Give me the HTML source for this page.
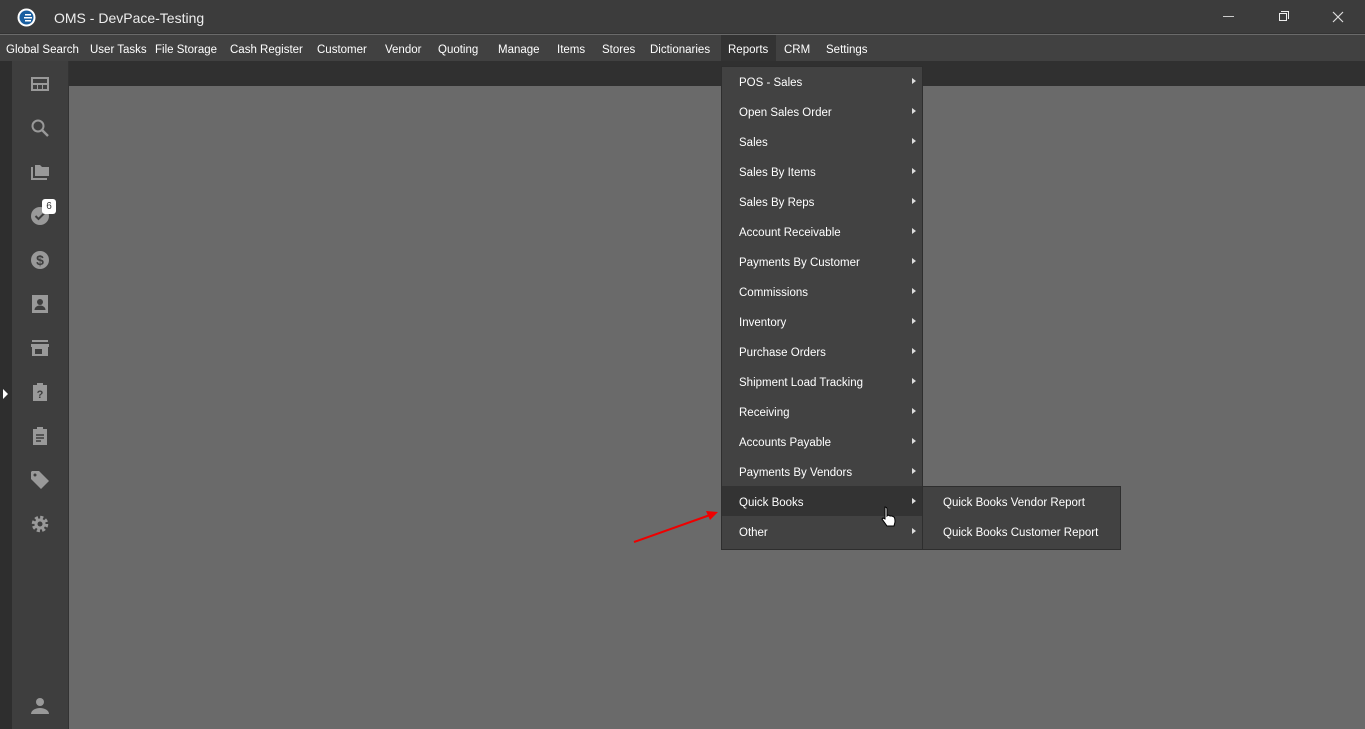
<!DOCTYPE html>
<html><head><meta charset="utf-8"><style>
*{margin:0;padding:0;box-sizing:border-box}
body{width:1365px;height:729px;overflow:hidden;background:#6a6a6a;font-family:"Liberation Sans",sans-serif;font-size:11.5px;color:#fff;position:relative}
.abs{position:absolute}
#title{left:0;top:0;width:1365px;height:34px;background:#3c3c3c;border-bottom:1px solid #333}
#mb{left:0;top:35px;width:1365px;height:26px;background:#414141}
#mb span{position:absolute;top:9px;white-space:nowrap}
#band{left:69px;top:61px;width:1296px;height:25px;background:#303030}
#strip{left:0;top:61px;width:12px;height:668px;background:#2e2e2e}
#side{left:12px;top:61px;width:57px;height:668px;background:#3e3e3e;border-right:1px solid #333}
.ic{position:absolute;left:18px;width:20px;height:20px}
#menu{left:721px;top:66px;width:202px;height:484px;background:#424242;border:1px solid #2e2e2e}
.it{position:absolute;left:0;width:200px;height:30px;line-height:32px;padding-left:17px}
.it:after{content:"";position:absolute;left:190px;top:11px;border-left:4px solid #ddd;border-top:3.5px solid transparent;border-bottom:3.5px solid transparent}
#sub{left:922px;top:486px;width:199px;height:64px;background:#424242;border:1px solid #2e2e2e}
#sub div{position:absolute;left:20px}
</style></head><body>
<div id="title" class="abs">
<svg class="abs" style="left:17px;top:8px" width="19" height="19" viewBox="0 0 19 19"><circle cx="9.5" cy="9.5" r="9" fill="#fff"/><circle cx="9.5" cy="9.5" r="7" fill="#1a5fa0"/><rect x="8" y="6" width="6" height="1.5" fill="#fff"/><rect x="7" y="9" width="8" height="1.5" fill="#fff"/><rect x="8" y="12" width="6" height="1.5" fill="#fff"/></svg>
<div class="abs" style="left:54px;top:10px;font-size:14px;color:#eee">OMS - DevPace-Testing</div>
<div class="abs" style="left:1223px;top:16px;width:11px;height:1px;background:#ccc"></div>
<div class="abs" style="left:1279px;top:13px;width:8px;height:8px;border:1px solid #eee"></div>
<div class="abs" style="left:1281px;top:11px;width:8px;height:8px;border-top:1px solid #eee;border-right:1px solid #eee"></div>
<svg class="abs" style="left:1332px;top:11px" width="12" height="12"><path d="M1 1L11 11M11 1L1 11" stroke="#ddd" stroke-width="1.2"/></svg>
</div>
<div id="mb" class="abs">
<div class="abs" style="left:721px;top:0;width:55px;height:26px;background:#333"></div>
<span style="left:6px">Global Search</span><span style="left:90px">User Tasks</span><span style="left:155px">File Storage</span><span style="left:230px">Cash Register</span><span style="left:317px">Customer</span><span style="left:385px">Vendor</span><span style="left:438px">Quoting</span><span style="left:498px">Manage</span><span style="left:557px">Items</span><span style="left:602px">Stores</span><span style="left:650px">Dictionaries</span><span style="left:728px">Reports</span><span style="left:784px">CRM</span><span style="left:826px">Settings</span>
</div>
<div id="band" class="abs"></div>
<div id="strip" class="abs"></div>
<div class="abs" style="left:3px;top:389px;border-left:5px solid #fff;border-top:5px solid transparent;border-bottom:5px solid transparent"></div>
<div id="side" class="abs">
<svg class="ic" style="top:13px" viewBox="0 0 20 20" fill="#999"><path d="M1 3h18v14H1zM3 5v4h14V5zM3 11v4h4v-4zm5 0v4h4v-4zm5 0v4h4v-4z" fill-rule="evenodd"/></svg>
<svg class="ic" style="top:57px" viewBox="0 0 20 20"><circle cx="8" cy="8" r="5.5" stroke="#999" stroke-width="2" fill="none"/><path d="M12 12l6 6" stroke="#999" stroke-width="2.4"/></svg>
<svg class="ic" style="top:101px" viewBox="0 0 20 20" fill="#999"><path d="M1 5h2v11h14v2H1zM5 3h5l2 2h7v9H5z"/></svg>
<svg class="ic" style="top:145px" viewBox="0 0 20 20"><circle cx="10" cy="10" r="9" fill="#999"/><path d="M5.5 10l3 3 6-6" stroke="#3e3e3e" stroke-width="2" fill="none"/></svg>
<div class="abs" style="left:30px;top:138px;width:14px;height:15px;background:#fff;border-radius:3px;color:#333;font-size:10px;text-align:center;line-height:15px">6</div>
<svg class="ic" style="top:189px" viewBox="0 0 20 20"><circle cx="10" cy="10" r="9" fill="#999"/><text x="10" y="15" font-size="14" font-weight="bold" text-anchor="middle" fill="#3e3e3e" font-family="Liberation Sans">$</text></svg>
<svg class="ic" style="top:233px" viewBox="0 0 20 20" fill="#999"><path d="M2 1h16v18H2z"/><circle cx="10" cy="8" r="3" fill="#3e3e3e"/><path d="M4.5 16c0-3 3-4.5 5.5-4.5s5.5 1.5 5.5 4.5z" fill="#3e3e3e"/></svg>
<svg class="ic" style="top:277px" viewBox="0 0 20 20" fill="#999"><path d="M2 2h16v2H2zM1 6h18v3H1zM2 9h16v9H2z"/><rect x="5" y="11" width="7" height="5" fill="#3e3e3e"/></svg>
<svg class="ic" style="top:321px" viewBox="0 0 20 20"><path d="M3 3h14v16H3z" fill="#999"/><rect x="7" y="1" width="6" height="4" fill="#999"/><text x="10" y="16" font-size="11" font-weight="bold" text-anchor="middle" fill="#3e3e3e" font-family="Liberation Sans">?</text></svg>
<svg class="ic" style="top:365px" viewBox="0 0 20 20"><path d="M3 3h14v16H3z" fill="#999"/><rect x="7" y="1" width="6" height="4" fill="#999"/><path d="M6 9h8M6 12h8M6 15h5" stroke="#3e3e3e" stroke-width="1.5"/></svg>
<svg class="ic" style="top:409px" viewBox="0 0 20 20" fill="#999"><path d="M1 2v7l10 10 8-8L9 1H2z"/><circle cx="5" cy="5" r="1.5" fill="#3e3e3e"/></svg>
<svg class="ic" style="top:453px" viewBox="0 0 20 20"><circle cx="10" cy="10" r="6.5" fill="none" stroke="#999" stroke-width="3.5" stroke-dasharray="3 2.1"/><circle cx="10" cy="10" r="5.5" fill="#999"/><circle cx="10" cy="10" r="2.5" fill="#3e3e3e"/></svg>
<svg class="ic" style="top:635px" viewBox="0 0 20 20" fill="#999"><circle cx="10" cy="6" r="4"/><path d="M1 18c0-4 5-6 9-6s9 2 9 6z"/></svg>
</div>
<div id="menu" class="abs">
<div class="abs" style="left:0;top:419px;width:200px;height:30px;background:#333"></div>
<div class="it" style="top:0">POS - Sales</div>
<div class="it" style="top:30px">Open Sales Order</div>
<div class="it" style="top:60px">Sales</div>
<div class="it" style="top:90px">Sales By Items</div>
<div class="it" style="top:120px">Sales By Reps</div>
<div class="it" style="top:150px">Account Receivable</div>
<div class="it" style="top:180px">Payments By Customer</div>
<div class="it" style="top:210px">Commissions</div>
<div class="it" style="top:240px">Inventory</div>
<div class="it" style="top:270px">Purchase Orders</div>
<div class="it" style="top:300px">Shipment Load Tracking</div>
<div class="it" style="top:330px">Receiving</div>
<div class="it" style="top:360px">Accounts Payable</div>
<div class="it" style="top:390px">Payments By Vendors</div>
<div class="it" style="top:420px">Quick Books</div>
<div class="it" style="top:450px">Other</div>
</div>
<div id="sub" class="abs"><div style="top:10px">Quick Books Vendor Report</div><div style="top:40px">Quick Books Customer Report</div></div>
<svg class="abs" style="left:630px;top:505px" width="90" height="40"><path d="M4 37L80 10" stroke="#e00" stroke-width="2"/><path d="M88 7L76 6 80 15z" fill="#e00"/></svg>
<svg class="abs" style="left:880px;top:505px" width="18" height="24"><path d="M5 2c1 0 2 1 2 2v7l1-1 2 1 2 0 2 1c1 1 1 3 1 5l-1 4H7L2 14l1-1 2 1V4c0-1 0-2 0-2z" fill="#fff" stroke="#000" stroke-width="1"/></svg>
</body></html>
